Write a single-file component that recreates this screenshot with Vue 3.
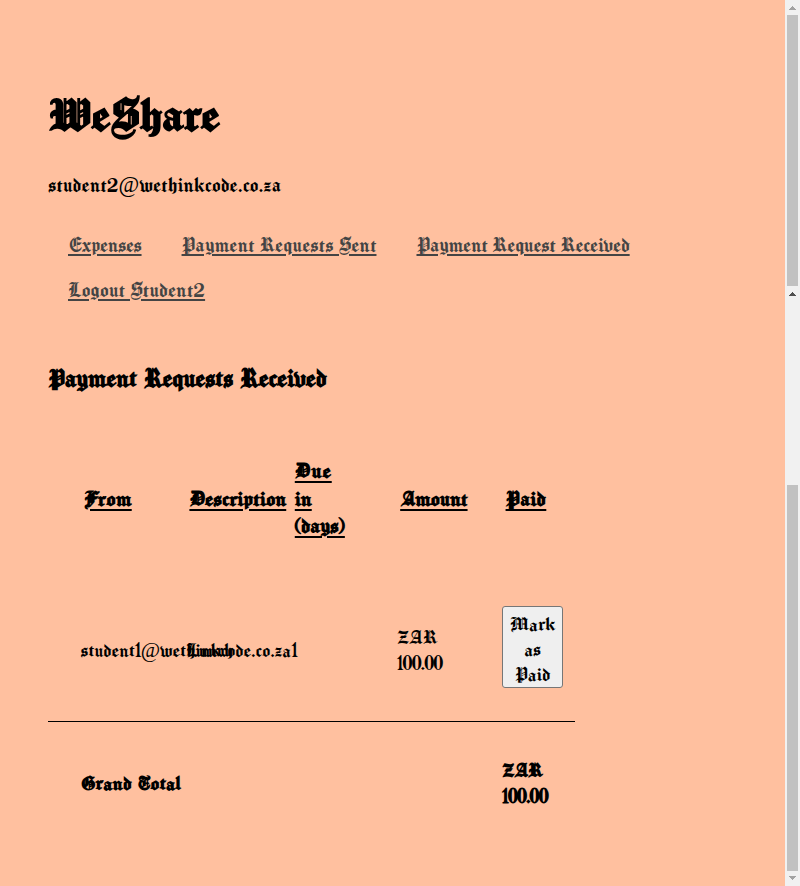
<script setup>
const links = [
  { label: 'Expenses', cls: 'expenses' },
  { label: 'Payment Requests Sent', cls: 'sent' },
  { label: 'Payment Request Received', cls: 'received' },
  { label: 'Logout Student2', cls: 'logout' },
]
</script>

<template>
  <div class="window">
    <main class="page">
      <h1>WeShare</h1>
      <p class="user">student2<span class="at">@</span>wethinkcode.co.za</p>
      <nav>
        <a v-for="l in links" :key="l.cls" href="#" :class="l.cls">{{ l.label }}</a>
      </nav>
      <h2>Payment Requests Received</h2>
      <section class="table">
        <div class="row head">
          <div class="from">From</div>
          <div class="desc">Description</div>
          <div><span class="due">Due</span><br />in<br />(days)</div>
          <div class="amount">Amount</div>
          <div class="paid">Paid</div>
        </div>
        <div class="row body">
          <div class="email">student<span class="num">1</span><span class="at">@</span>wethinkcode.co.za</div>
          <div class="lunch">Lunch</div>
          <div><span class="num">1</span></div>
          <div><span class="zar">ZAR</span><br /><span class="num">100.00</span></div>
          <div><button type="button">Mark as Paid</button></div>
        </div>
        <div class="row foot">
          <div class="total">Grand Total</div>
          <div><span class="zar">ZAR</span><br /><span class="num">100.00</span></div>
        </div>
      </section>
    </main>
    <aside class="scroll">
      <svg class="arrow" viewBox="0 0 15 15" shape-rendering="crispEdges"><path d="M7 6h1v1h1v1h1v1h1v1H4V9h1V8h1V7h1z" fill="#a3a3a3" /></svg>
      <div class="thumb first"></div>
      <svg class="arrow" viewBox="0 0 15 15" shape-rendering="crispEdges"><path d="M7 6h1v1h1v1h1v1h1v1H4V9h1V8h1V7h1z" fill="#505050" /></svg>
      <div class="thumb second"></div>
      <svg class="arrow" viewBox="0 0 15 15" shape-rendering="crispEdges"><path d="M4 5h7v1h-1v1H9v1H8v1H7V8H6V7H5V6H4z" fill="#a3a3a3" /></svg>
    </aside>
  </div>
</template>

<style>
body {
  margin: 0;
  background: #ffc09f;
}
</style>

<style scoped>
.window {
  display: flex;
  height: 886px;
  overflow: hidden;
  background: #ffc09f;
  color: #000;
  font-family: "Old English Text MT", "Manufacturing Consent", "Liberation Serif", serif;
  font-size: 22.5px;
}
.page {
  flex: 1;
  padding: 85px 48px 0;
}
h1 {
  margin: 0;
  font-size: 52px;
  line-height: 60px;
  letter-spacing: 0.1px;
}
.user {
  margin: 25px 0 22px;
  line-height: 30px;
  letter-spacing: 0.08px;
}
.at {
  font-family: "Liberation Serif", serif;
  line-height: 1;
}
nav {
  display: flex;
  flex-wrap: wrap;
  height: 90px;
}
nav a {
  margin: 0 20px;
  line-height: 45px;
  color: #444;
  text-decoration: underline;
  text-decoration-thickness: 2px;
  text-underline-offset: 2px;
}
.expenses { letter-spacing: -0.25px; }
.sent { letter-spacing: 0.16px; }
.received { letter-spacing: -0.14px; }
.logout { letter-spacing: 0.1px; }
h2 {
  margin: 46px 0 59px;
  font-size: 28px;
  line-height: 40px;
  letter-spacing: -0.12px;
  word-spacing: 1px;
}
.table {
  width: 527px;
}
.row {
  display: grid;
  grid-template-columns: repeat(5, 105.4px);
  align-items: center;
  white-space: nowrap;
}
.row > div {
  padding-left: 32.5px;
}
.head {
  height: 82.5px;
  font-size: 23.5px;
  font-weight: bold;
  line-height: 27.5px;
  text-decoration: underline;
  text-decoration-thickness: 2px;
  text-underline-offset: 3px;
}
.head > div {
  padding-left: 36px;
}
.from { letter-spacing: 0.5px; }
.desc { letter-spacing: 0.1px; }
.due { letter-spacing: 1px; }
.paid { letter-spacing: 0.4px; }
.body {
  height: 140px;
  margin-top: 41.5px;
  border-bottom: 1px solid #000;
  font-size: 21px;
  line-height: 26.5px;
}
.zar {
  font-size: 22px;
  letter-spacing: 0.8px;
  line-height: 1;
}
.num {
  font-family: "UnifrakturMaguntia", "Liberation Serif", serif;
  letter-spacing: -0.8px;
  line-height: 1;
}
button {
  display: block;
  box-sizing: border-box;
  width: 61px;
  height: 82px;
  margin-bottom: 8px;
  padding: 5px 4px 0;
  border: 1px solid #767676;
  border-radius: 3px;
  background: #efefef;
  color: #000;
  font: inherit;
  font-size: 21.5px;
  line-height: 25px;
  white-space: normal;
}
.foot {
  height: 123px;
  font-size: 21px;
  font-weight: bold;
  line-height: 26px;
}
.total {
  grid-column: span 4;
  padding-bottom: 2px;
  font-size: 22px;
  letter-spacing: 0.3px;
}
.scroll {
  display: flex;
  flex-direction: column;
  width: 15px;
  background: #f1f1f1;
}
.arrow {
  width: 15px;
  height: 15px;
}
.thumb {
  margin: 0 2px;
  background: #c1c1c1;
}
.first { height: 271px; }
.second {
  height: 386px;
  margin-top: 184px;
}
</style>
